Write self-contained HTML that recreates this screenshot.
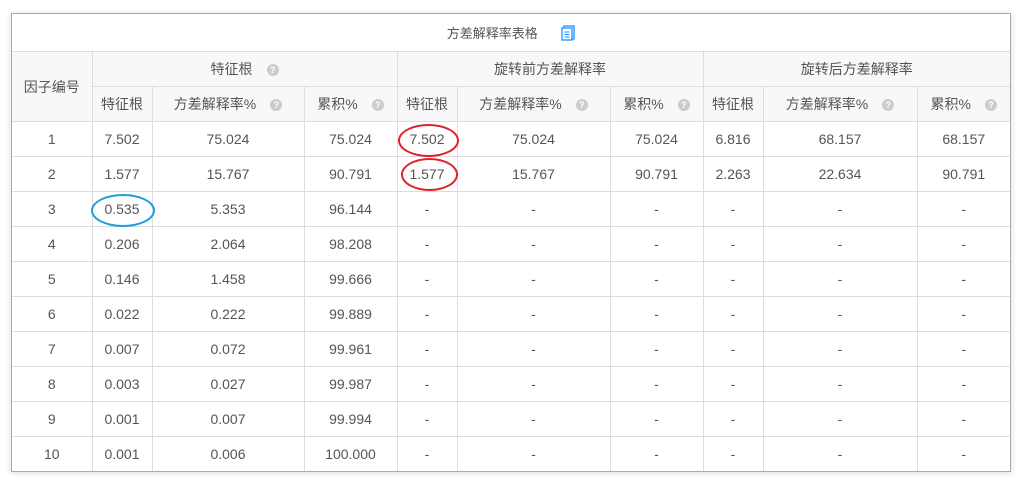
<!DOCTYPE html>
<html><head><meta charset="utf-8"><style>
body{margin:0;width:1025px;height:484px;background:#fff;position:relative;overflow:hidden;font-family:"Liberation Sans","Noto Sans CJK SC",sans-serif;}
.box{position:absolute;left:11px;top:13px;width:998px;height:457px;border:1px solid #aaa;box-shadow:0 1px 6px rgba(0,0,0,0.15);background:#fff;}
table{border-collapse:collapse;table-layout:fixed;width:998px;color:#555;font-size:14px;}
td{border:1px solid #ddd;text-align:center;height:34px;padding:0;}
tr:first-child td{border-top:none;}
td:first-child{border-left:none;}td:last-child{border-right:none;}
tr:last-child td{border-bottom:none;}
.h td{background:#f8f8f8;}
.t td{height:37px;background:#fff;font-size:13px;}
.q{display:inline-block;width:12px;height:12px;border-radius:50%;background:#ccc;color:#fff;font-size:9px;line-height:12px;font-weight:bold;vertical-align:1px;margin-left:14px;}
.el{position:absolute;border:2px solid #e0202a;border-radius:50%;}
</style></head><body>
<div class="box">
<table>
<colgroup><col style="width:80px"><col style="width:60px"><col style="width:152px"><col style="width:93px"><col style="width:60px"><col style="width:153px"><col style="width:93px"><col style="width:60px"><col style="width:154px"><col style="width:93px"></colgroup>
<tr class="t"><td colspan="10">方差解释率表格 <svg width="14" height="16" viewBox="0 0 14 16" style="vertical-align:-3px;margin-left:20px"><rect x="3" y="1" width="10" height="13" fill="none" stroke="#1e90ff" stroke-width="1.3"/><rect x="1" y="3" width="10" height="12" fill="#fff" stroke="#1e90ff" stroke-width="1.3"/><path d="M3.5 7h5M3.5 9.5h5M3.5 12h5" stroke="#1e90ff" stroke-width="1.1"/></svg></td></tr>
<tr class="h"><td rowspan="2">因子编号</td><td colspan="3">特征根<span class="q">?</span></td><td colspan="3">旋转前方差解释率</td><td colspan="3">旋转后方差解释率</td></tr>
<tr class="h"><td>特征根</td><td>方差解释率%<span class="q">?</span></td><td>累积%<span class="q">?</span></td><td>特征根</td><td>方差解释率%<span class="q">?</span></td><td>累积%<span class="q">?</span></td><td>特征根</td><td>方差解释率%<span class="q">?</span></td><td>累积%<span class="q">?</span></td></tr>
<tr><td>1</td><td>7.502</td><td>75.024</td><td>75.024</td><td>7.502</td><td>75.024</td><td>75.024</td><td>6.816</td><td>68.157</td><td>68.157</td></tr>
<tr><td>2</td><td>1.577</td><td>15.767</td><td>90.791</td><td>1.577</td><td>15.767</td><td>90.791</td><td>2.263</td><td>22.634</td><td>90.791</td></tr>
<tr><td>3</td><td>0.535</td><td>5.353</td><td>96.144</td><td>-</td><td>-</td><td>-</td><td>-</td><td>-</td><td>-</td></tr>
<tr><td>4</td><td>0.206</td><td>2.064</td><td>98.208</td><td>-</td><td>-</td><td>-</td><td>-</td><td>-</td><td>-</td></tr>
<tr><td>5</td><td>0.146</td><td>1.458</td><td>99.666</td><td>-</td><td>-</td><td>-</td><td>-</td><td>-</td><td>-</td></tr>
<tr><td>6</td><td>0.022</td><td>0.222</td><td>99.889</td><td>-</td><td>-</td><td>-</td><td>-</td><td>-</td><td>-</td></tr>
<tr><td>7</td><td>0.007</td><td>0.072</td><td>99.961</td><td>-</td><td>-</td><td>-</td><td>-</td><td>-</td><td>-</td></tr>
<tr><td>8</td><td>0.003</td><td>0.027</td><td>99.987</td><td>-</td><td>-</td><td>-</td><td>-</td><td>-</td><td>-</td></tr>
<tr><td>9</td><td>0.001</td><td>0.007</td><td>99.994</td><td>-</td><td>-</td><td>-</td><td>-</td><td>-</td><td>-</td></tr>
<tr><td>10</td><td>0.001</td><td>0.006</td><td>100.000</td><td>-</td><td>-</td><td>-</td><td>-</td><td>-</td><td>-</td></tr>
</table>
</div>
<div class="el" style="left:398px;top:124px;width:57px;height:29px;"></div>
<div class="el" style="left:401px;top:158px;width:53px;height:29px;"></div>
<div class="el" style="left:91px;top:194px;width:60px;height:29px;border-color:#1a9ee0;"></div>
</body></html>
